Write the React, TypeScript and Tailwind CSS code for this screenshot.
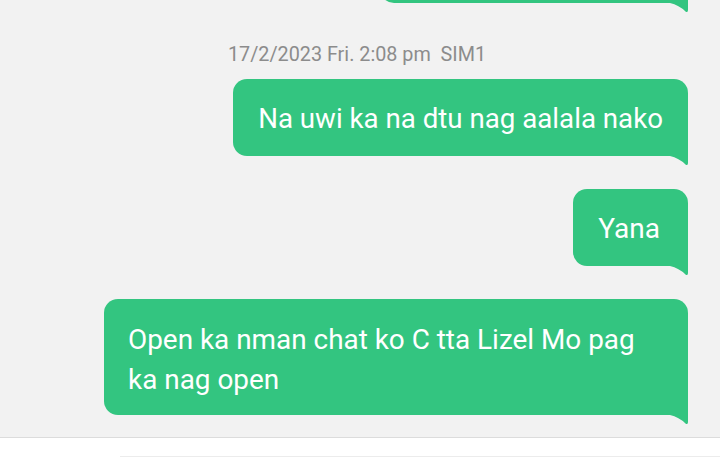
import React from "react";

const Tail = () => (
  <svg
    className="absolute right-0 top-full"
    width="18"
    height="10"
    viewBox="0 0 18 10"
  >
    <path d="M0 0 H18 V7 Q18 10 15.5 8.5 Q9 2 0 0 Z" fill="#33c580" />
  </svg>
);

function Bubble({
  children,
  className = "",
}: {
  children: React.ReactNode;
  className?: string;
}) {
  return (
    <div
      className={
        "relative bg-[#33c580] text-white rounded-tl-[14px] rounded-tr-[14px] rounded-bl-[14px] " +
        className
      }
    >
      {children}
      <Tail />
    </div>
  );
}

export default function App() {
  return (
    <div
      className="w-[720px] h-[457px] overflow-hidden bg-[#f2f2f2] flex flex-col"
      style={{ fontFamily: "Roboto, 'Noto Sans', sans-serif" }}
    >
      <div className="flex-1 flex flex-col items-end pr-[32px]">
        <Bubble className="w-[308px] h-[60px] mt-[-57px]">
          <span />
        </Bubble>
        <div className="self-stretch flex justify-center mt-[40px]">
          <span className="text-[19.8px] leading-[24px] text-[#8c8c8c] ml-[26px] whitespace-pre">
            17/2/2023 Fri. 2:08 pm  SIM1
          </span>
        </div>
        <Bubble className="mt-[12px] h-[77px] pl-[25px] pr-[25px] pt-[2px] flex items-center">
          <span className="text-[27.7px] leading-[40px]">
            Na uwi ka na dtu nag aalala nako
          </span>
        </Bubble>
        <Bubble className="mt-[33px] h-[77px] pl-[25px] pr-[28px] pt-[3px] flex items-center">
          <span className="text-[28px] leading-[40px]">Yana</span>
        </Bubble>
        <Bubble className="mt-[33px] w-[584px] h-[116px] pl-[24px] pr-[24px] pt-[21px]">
          <p className="text-[27.9px] leading-[40px] max-w-[520px]">
            Open ka nman chat ko C tta Lizel Mo pag ka nag open
          </p>
        </Bubble>
      </div>
      <div className="h-[20px] border-t border-[#dcdcdc] bg-white shrink-0 relative">
        <div className="absolute left-[120px] right-0 bottom-0 border-t border-[#ececec]" />
      </div>
    </div>
  );
}
